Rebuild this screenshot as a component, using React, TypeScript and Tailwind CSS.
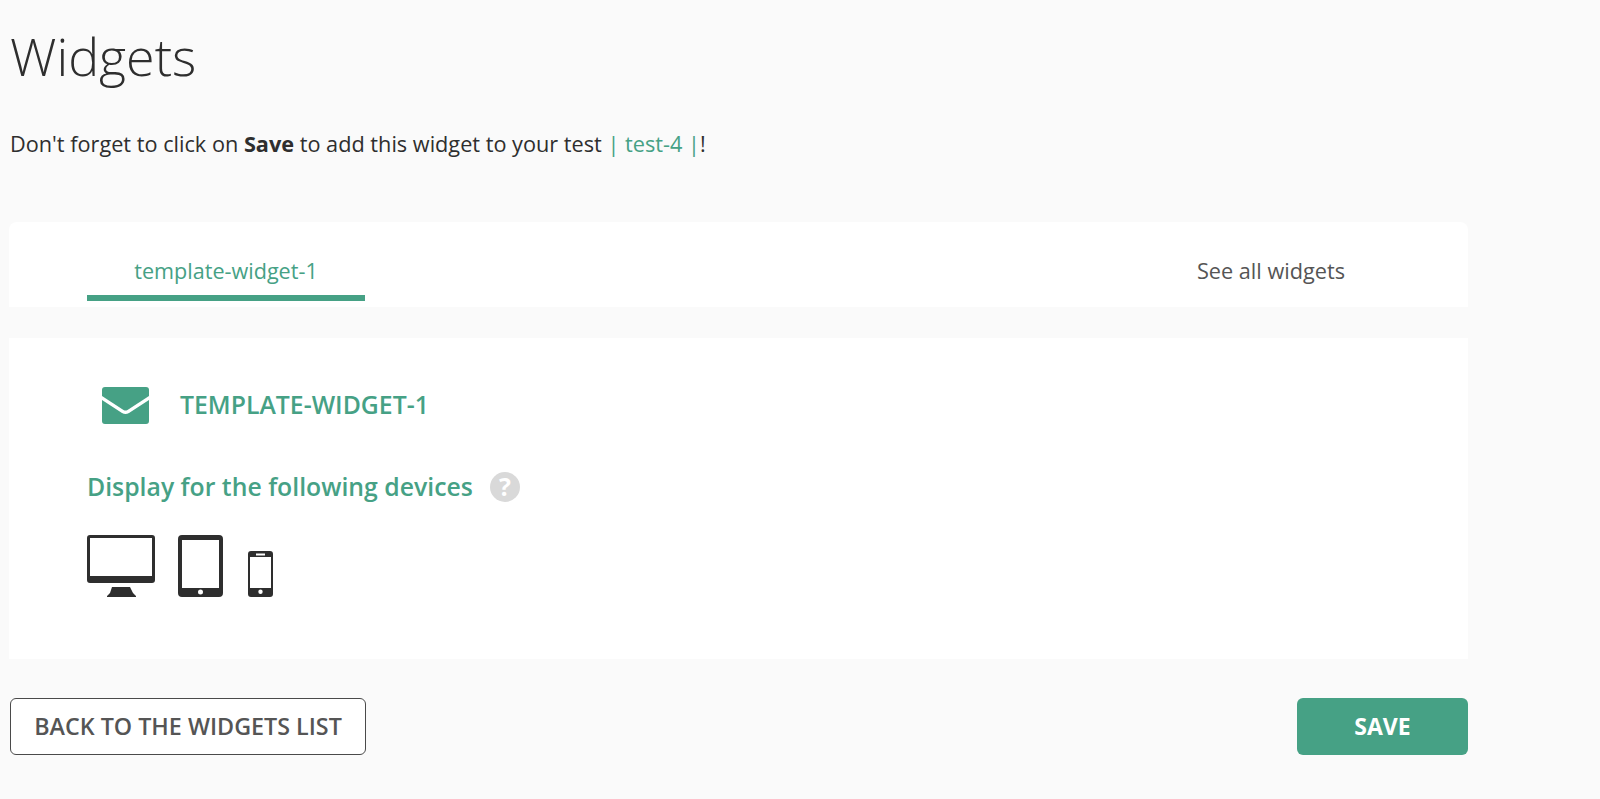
import React from 'react';

const DesktopIcon = () => (
  <svg width="68" height="62" viewBox="0 0 68 62" className="block">
    <path
      fillRule="evenodd"
      fill="#2e2e2e"
      d="M3 0h62a3 3 0 0 1 3 3v42a3 3 0 0 1-3 3H3a3 3 0 0 1-3-3V3a3 3 0 0 1 3-3zM3 3v38h62V3z"
    />
    <path fill="#2e2e2e" d="M25 52h18l3 6 3 3v1H20v-1l3-3z" />
  </svg>
);

const TabletIcon = () => (
  <svg width="45" height="62" viewBox="0 0 45 62" className="block">
    <path
      fillRule="evenodd"
      fill="#2e2e2e"
      d="M4 0h37a4 4 0 0 1 4 4v54a4 4 0 0 1-4 4H4a4 4 0 0 1-4-4V4a4 4 0 0 1 4-4zM4 5v48h37V5zM22.500 54.500a2.500 2.500 0 1 0 0 5 2.500 2.500 0 0 0 0-5z"
    />
  </svg>
);

const PhoneIcon = () => (
  <svg width="25" height="46" viewBox="0 0 25 46" className="block">
    <path
      fillRule="evenodd"
      fill="#2e2e2e"
      d="M3 0h19a3 3 0 0 1 3 3v40a3 3 0 0 1-3 3H3a3 3 0 0 1-3-3V3a3 3 0 0 1 3-3zM8 2.500v2h9v-2zM2 6v31h21V6zM12.500 38.500a2.200 2.200 0 1 0 0 4.400 2.200 2.200 0 0 0 0-4.400z"
    />
  </svg>
);

const MailIcon = () => (
  <svg width="47" height="37" viewBox="0 0 47 37" className="block">
    <path fill="#46a185" d="M3 0h41a3 3 0 0 1 3 3v6L25.500 23q-2 1-4 0L0 9V3a3 3 0 0 1 3-3z" />
    <path fill="#46a185" d="M0 13l20 13q3.500 2 7 0l20-13v21a3 3 0 0 1-3 3H3a3 3 0 0 1-3-3z" />
  </svg>
);

export default function App() {
  return (
    <div className="min-h-[799px] bg-[#fafafa] px-[9px] font-['Open_Sans','Noto_Sans',sans-serif] text-[#2e2e2e] overflow-hidden">
      <div className="w-[1459px]">
        <h1 className="pt-[20px] pl-px text-[52px] leading-[71px] font-light text-[#2e2e2e]">Widgets</h1>

        <p className="mt-[38px] pl-px text-[21.7px] leading-[30px] text-[#2e2e2e]">
          Don't forget to click on <strong className="font-bold">Save</strong> to add this widget to your test{' '}
          <span className="text-[#46a185]">| test-4 |</span>!
        </p>

        <div className="mt-[63px] h-[85px] rounded-t-lg bg-white flex justify-between pl-[78px] pr-[123px]">
          <div className="w-[278px] h-[79px] border-b-[6px] border-[#46a185] text-center text-[#46a185] text-[21.6px] leading-[30px] pt-[34px]">
            template-widget-1
          </div>
          <div className="pt-[34px] text-[21.7px] leading-[30px] text-[#555555]">See all widgets</div>
        </div>

        <div className="mt-[31px] h-[321px] bg-white pl-[78px]">
          <div className="flex items-center pt-[49px] pl-[15px]">
            <MailIcon />
            <span className="ml-[31px] pb-[2px] text-[24.8px] leading-[33px] font-semibold text-[#46a185]">TEMPLATE-WIDGET-1</span>
          </div>

          <div className="flex items-center mt-[46px]">
            <span className="text-[24.8px] leading-[33px] font-semibold text-[#46a185]">Display for the following devices</span>
            <span className="ml-[17px] w-[30px] h-[30px] rounded-full bg-[#d9d9d9] text-white flex items-center justify-center text-[25px] font-bold leading-none">
              ?
            </span>
          </div>

          <div className="flex items-end mt-[32px]">
            <DesktopIcon />
            <div className="ml-[23px]">
              <TabletIcon />
            </div>
            <div className="ml-[25px]">
              <PhoneIcon />
            </div>
          </div>
        </div>

        <div className="mt-[39px] flex justify-between">
          <button className="w-[356px] h-[57px] ml-px rounded-md border border-[#4a4a4a] bg-white text-[23.3px] font-semibold text-[#555555]">
            BACK TO THE WIDGETS LIST
          </button>
          <button className="w-[171px] h-[57px] rounded-md bg-[#46a185] text-[23px] font-bold text-white">SAVE</button>
        </div>
      </div>
    </div>
  );
}
